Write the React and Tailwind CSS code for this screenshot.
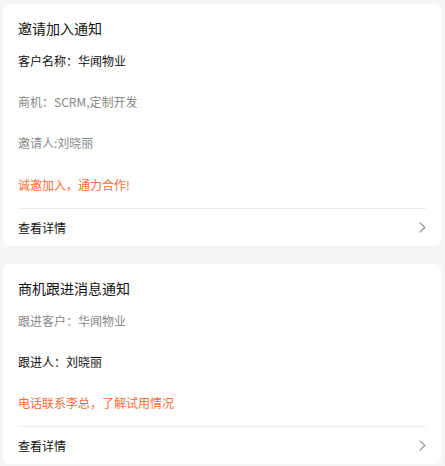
import React from "react";

const font = { fontFamily: '"Microsoft YaHei", "Noto Sans CJK SC", "Noto Sans", sans-serif' };

function Chevron() {
  return (
    <svg width="7" height="11" viewBox="0 0 7 11" fill="none" className="block">
      <path d="M1 0.8 L5.8 5.5 L1 10.2" stroke="#8c8c8c" strokeWidth="1.1" strokeLinecap="round" strokeLinejoin="round" />
    </svg>
  );
}

function Card({ title, rows, highlight, className }) {
  return (
    <div className={"ml-[3px] w-[438px] rounded-[6px] bg-white px-[15px] " + (className || "")}>
      <div className="pt-[14px] pb-[2px] text-[14px] leading-[20px] text-[#111]">{title}</div>
      {rows.map((r, i) => (
        <div
          key={i}
          className={
            "text-[12px] " +
            r.h +
            " " +
            (r.dark ? "text-[#111]" : "text-[#888]")
          }
        >
          {r.text}
        </div>
      ))}
      <div className={"text-[12px] text-[#fa6b35] " + highlight.h}>{highlight.text}</div>
      <div className="mt-[2px] h-px bg-[#ececec]" />
      <div className="flex h-[37px] items-center justify-between">
        <span className="text-[12px] text-[#111]">查看详情</span>
        <Chevron />
      </div>
    </div>
  );
}

export default function App() {
  return (
    <div className="min-h-[466px] w-[445px] bg-[#f5f5f5] pt-[4px] pb-[2px]" style={font}>
      <Card
        title="邀请加入通知"
        rows={[
          { text: "客户名称：华闻物业", dark: true, h: "h-[41px] leading-[41px]" },
          { text: "商机：SCRM,定制开发", h: "h-[41px] leading-[41px]" },
          { text: "邀请人:刘晓丽", h: "h-[42px] leading-[42px]" },
        ]}
        highlight={{ text: "诚邀加入，通力合作!", h: "h-[42px] leading-[42px]" }}
      />
      <Card
        className="mt-[18px]"
        title="商机跟进消息通知"
        rows={[
          { text: "跟进客户：华闻物业", h: "h-[41px] leading-[41px]" },
          { text: "跟进人：刘晓丽", dark: true, h: "h-[41px] leading-[41px]" },
        ]}
        highlight={{ text: "电话联系李总，了解试用情况", h: "h-[42px] leading-[42px]" }}
      />
    </div>
  );
}
